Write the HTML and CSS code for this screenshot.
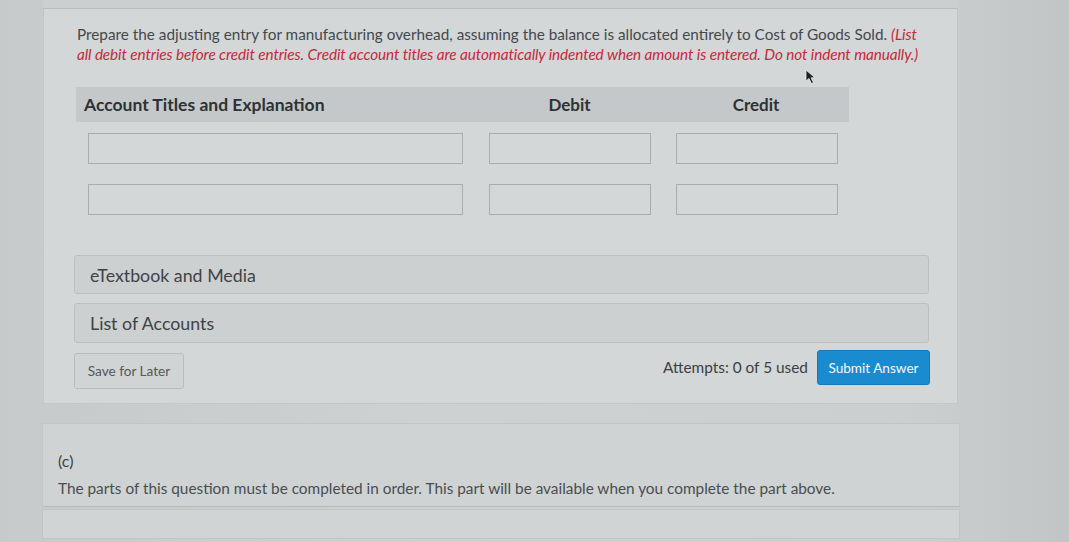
FILE: index.html
```html
<!DOCTYPE html>
<html>
<head>
<meta charset="utf-8">
<link rel="stylesheet" href="styles.css">
</head>
<body>
<div class="page">
  <div class="topstrip"></div>
  <section class="panel">
    <p class="prompt">Prepare the adjusting entry for manufacturing overhead, assuming the balance is allocated entirely to Cost of Goods Sold. <em class="note">(List all debit entries before credit entries. Credit account titles are automatically indented when amount is entered. Do not indent manually.)</em></p>
    <div class="journal">
      <div class="hd hd-title">Account Titles and Explanation</div>
      <div class="hd hd-num">Debit</div>
      <div class="hd hd-num">Credit</div>
      <div class="cell c1"><span class="inp"></span></div>
      <div class="cell c2"><span class="inp"></span></div>
      <div class="cell c3"><span class="inp"></span></div>
      <div class="cell c1"><span class="inp"></span></div>
      <div class="cell c2"><span class="inp"></span></div>
      <div class="cell c3"><span class="inp"></span></div>
    </div>
    <div class="bar bar-first">eTextbook and Media</div>
    <div class="bar">List of Accounts</div>
    <div class="actions">
      <button class="btn-save">Save for Later</button>
      <div class="right">
        <span class="attempts">Attempts: 0 of 5 used</span>
        <button class="btn-submit">Submit Answer</button>
      </div>
    </div>
    <svg class="pointer" width="12" height="16" viewBox="0 0 12 16"><path d="M1 1 L1 12 L4 9.5 L6.5 14.5 L8.5 13.5 L6 8.8 L10 8.8 Z" fill="#1e2022" stroke="#e8eaeb" stroke-width="0.8"/></svg>
  </section>
  <section class="panel2">
    <div class="part">(c)</div>
    <p class="locked">The parts of this question must be completed in order. This part will be available when you complete the part above.</p>
  </section>
  <section class="panel3"></section>
</div>
</body>
</html>
```
FILE: styles.css
```css
html, body {
  margin: 0;
  padding: 0;
}
body {
  background: linear-gradient(90deg, #c6cacb 0%, #cdd1d2 40%, #cbcfd0 85%, #c1c5c6 100%);
  font-family: Lato, "Open Sans", sans-serif;
  width: 1069px;
  height: 542px;
  overflow: hidden;
}
.page {
  padding-left: 43px;
}
.topstrip {
  width: 915px;
  height: 8px;
  background: #cbcfd0;
  border-bottom: 1px solid #b9bdbf;
}
.panel {
  position: relative;
  width: 915px;
  box-sizing: border-box;
  background: #d3d7d8;
  border: 1px solid #c3c7c8;
  border-top: none;
  padding: 15px 30px 14px 30px;
}
.prompt {
  margin: 0 0 0 3px;
  font-size: 15.3px;
  line-height: 20px;
  color: #45484b;
  width: 846px;
}
.note {
  color: #c42a3c;
  letter-spacing: -0.1px;
}
.journal {
  margin-top: 23px;
  margin-left: 2px;
  display: grid;
  grid-template-columns: 400px 187px 186px;
}
.hd {
  height: 35px;
  background: #c4c8ca;
  font-weight: bold;
  font-size: 17px;
  color: #2f3234;
  display: flex;
  align-items: center;
}
.hd-title {
  padding-left: 8px;
  font-size: 17.5px;
}
.hd-num {
  justify-content: center;
}
.cell {
  padding: 11px 0 9px 0;
  height: 31px;
}
.c1 { padding-left: 12px; }
.c2, .c3 { padding-left: 13px; }
.inp {
  display: block;
  height: 31px;
  box-sizing: border-box;
  border: 1px solid #a9adaf;
  background: #d3d7d8;
}
.c1 .inp { width: 375px; }
.c2 .inp, .c3 .inp { width: 162px; }
.bar {
  margin-top: 9px;
  width: 855px;
  height: 40px;
  box-sizing: border-box;
  background: #ccd0d1;
  border: 1px solid #bcc0c2;
  border-radius: 3px;
  font-size: 17.8px;
  color: #3f4245;
  display: flex;
  align-items: center;
  padding-left: 15px;
}
.bar-first {
  margin-top: 31px;
  height: 39px;
}
.actions {
  display: flex;
  justify-content: space-between;
  align-items: flex-start;
  width: 856px;
  margin-top: 7px;
}
.btn-save {
  margin-top: 3px;
  width: 110px;
  height: 36px;
  background: #d0d4d5;
  border: 1px solid #b9bdbf;
  border-radius: 3px;
  font-family: Lato, sans-serif;
  font-size: 13.6px;
  color: #55585b;
  padding: 0;
}
.right {
  display: flex;
  align-items: center;
  gap: 9px;
}
.attempts {
  font-size: 15.4px;
  color: #3c3f42;
  margin-top: -2px;
}
.btn-submit {
  width: 113px;
  height: 35px;
  background: #1b8bd0;
  border: 1px solid #1579b8;
  border-radius: 3px;
  color: #f4f8fb;
  font-family: Lato, sans-serif;
  font-size: 13.6px;
  padding: 0;
}
.pointer {
  position: absolute;
  left: 761px;
  top: 60px;
}
.panel2 {
  margin-top: 19px;
  margin-left: -1px;
  width: 918px;
  height: 84px;
  box-sizing: border-box;
  background: #cfd3d4;
  border: 1px solid #c2c6c7;
  border-bottom-color: #b6babb;
  padding: 26px 15px 0 15px;
}
.part {
  font-size: 16px;
  color: #3e4144;
  line-height: 22px;
}
.locked {
  margin: 7px 0 0 0;
  font-size: 15.35px;
  line-height: 19px;
  color: #4a4d50;
}
.panel3 {
  margin-top: 2px;
  margin-left: -1px;
  width: 918px;
  height: 30px;
  box-sizing: border-box;
  background: #d0d4d5;
  border: 1px solid #c0c4c5;
}
```
